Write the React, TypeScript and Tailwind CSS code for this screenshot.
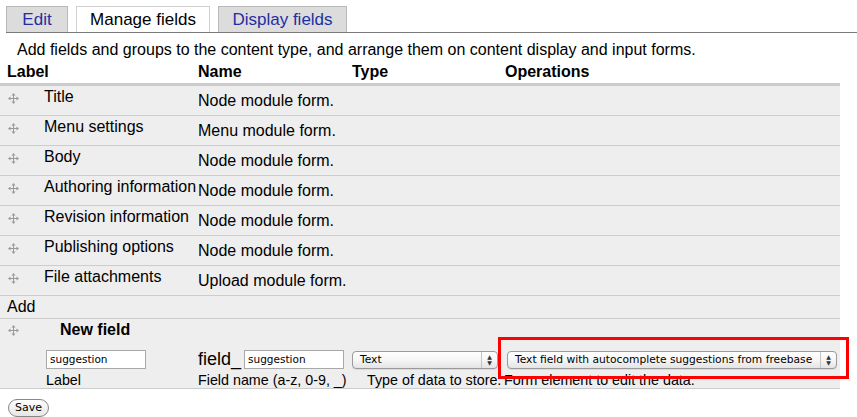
import React from "react";

const rows = [
  { label: "Title", name: "Node module form." },
  { label: "Menu settings", name: "Menu module form." },
  { label: "Body", name: "Node module form." },
  { label: "Authoring information", name: "Node module form." },
  { label: "Revision information", name: "Node module form." },
  { label: "Publishing options", name: "Node module form." },
  { label: "File attachments", name: "Upload module form." },
];

function DragIcon() {
  return (
    <svg width="11" height="11" viewBox="0 0 11 11" className="shrink-0">
      <g stroke="#9a9a9a" strokeWidth="1" fill="none">
        <line x1="5.5" y1="1" x2="5.5" y2="10" />
        <line x1="1" y1="5.5" x2="10" y2="5.5" />
      </g>
      <g fill="#9a9a9a">
        <path d="M5.5 0 L7.5 2.5 L3.5 2.5 Z" />
        <path d="M5.5 11 L7.5 8.5 L3.5 8.5 Z" />
        <path d="M0 5.5 L2.5 3.5 L2.5 7.5 Z" />
        <path d="M11 5.5 L8.5 3.5 L8.5 7.5 Z" />
      </g>
    </svg>
  );
}

function MacSelect({ value, width }: { value: string; width: string }) {
  return (
    <div
      className={`${width} h-[18px] flex items-center rounded-[4px] border border-[#9a9a9a] bg-gradient-to-b from-white via-[#f6f6f6] to-[#e4e4e4] shadow-[0_1px_0_rgba(0,0,0,0.08)] font-['DejaVu_Sans',sans-serif] text-[10.7px] text-black`}
    >
      <span className="flex-1 pl-[7px] whitespace-nowrap overflow-hidden">{value}</span>
      <span className="w-[16px] h-full flex flex-col items-center justify-center border-l border-[#c4c4c4] text-[6px] leading-[6px] text-[#333]">
        <span>▲</span>
        <span>▼</span>
      </span>
    </div>
  );
}

function TextInput({ value }: { value: string }) {
  return (
    <div className="w-[100px] h-[19px] border border-[#a9a9a9] bg-white font-['DejaVu_Sans',sans-serif] text-[10.5px] leading-[17px] pl-[3px]">
      {value}
    </div>
  );
}

export default function App() {
  return (
    <div className="w-[857px] h-[417px] bg-white font-['Liberation_Sans',Arial,sans-serif] text-[16px] text-black overflow-hidden">
      {/* tabs */}
      <div className="h-[33px] flex items-end gap-[8px] pt-[6px] border-b border-[#7a7a7a] ml-[6px]">
        <div className="w-[62px] h-[26px] flex items-center justify-center bg-[#dcdcdc] border border-b-0 border-[#b9b9b9] text-[17px] text-[#1f2fa3]">
          Edit
        </div>
        <div className="w-[134px] h-[26px] flex items-center justify-center bg-white border border-b-0 border-[#d0d0d0] text-[17px]">
          Manage fields
        </div>
        <div className="w-[129px] h-[26px] flex items-center justify-center bg-[#dcdcdc] border border-b-0 border-[#b9b9b9] text-[17px] text-[#1f2fa3]">
          Display fields
        </div>
      </div>

      <p className="pl-[17px] pt-[8px] leading-[18px]">
        Add fields and groups to the content type, and arrange them on content display and input forms.
      </p>

      <div className="w-[840px]">
        {/* header */}
        <div className="h-[27px] grid grid-cols-[198px_154px_153px_1fr] items-end pb-[2px] border-b-[3px] border-[#cccccc] font-bold leading-[18px]">
          <div className="pl-[7px]">Label</div>
          <div>Name</div>
          <div>Type</div>
          <div>Operations</div>
        </div>

        {rows.map((r) => (
          <div
            key={r.label}
            className="h-[30px] grid grid-cols-[198px_154px_153px_1fr] bg-[#eeeeee] border-b border-[#cccccc] leading-[18px]"
          >
            <div className="flex items-start pl-[8px] pt-[2px] whitespace-nowrap">
              <span className="pt-[5px]">
                <DragIcon />
              </span>
              <span className="pl-[25px]">{r.label}</span>
            </div>
            <div className="pt-[6px] whitespace-nowrap">{r.name}</div>
            <div />
            <div />
          </div>
        ))}

        <div className="h-[23px] bg-[#eeeeee] border-b border-[#cccccc] pl-[7px] pt-[2px] leading-[18px]">Add</div>

        <div className="h-[70px] bg-[#eeeeee] border-b border-[#cccccc]">
          <div className="h-[22px] flex items-center pl-[8px] leading-[18px]">
            <DragIcon />
            <span className="pl-[41px] font-bold">New field</span>
          </div>
          <div className="grid grid-cols-[198px_154px_153px_1fr] pt-[9px]">
            <div className="pl-[46px]">
              <TextInput value="suggestion" />
              <div className="pt-[3px] text-[14.3px] leading-[17px]">Label</div>
            </div>
            <div>
              <div className="flex items-center">
                <span className="text-[18px] leading-[19px] pr-[3px]">field_</span>
                <TextInput value="suggestion" />
              </div>
              <div className="pt-[3px] text-[14.3px] leading-[17px] whitespace-nowrap">Field name (a-z, 0-9, _)</div>
            </div>
            <div className="pt-[1px]">
              <MacSelect value="Text" width="w-[146px]" />
              <div className="pt-[3px] pl-[15px] text-[14.3px] leading-[17px] whitespace-nowrap">Type of data to store.</div>
            </div>
            <div className="pt-[1px] pl-[2px]">
              <div className="relative w-[330px]">
                <MacSelect value="Text field with autocomplete suggestions from freebase" width="w-[330px]" />
                <div className="absolute -left-[9px] -top-[14px] w-[351px] h-[42px] border-[3px] border-[#ff0000]" />
              </div>
              <div className="pt-[3px] -ml-[3px] text-[14.3px] leading-[17px] whitespace-nowrap">Form element to edit the data.</div>
            </div>
          </div>
        </div>
      </div>

      <div className="pl-[8px] pt-[5px]">
        <button className="h-[18px] w-[41px] rounded-full border border-[#888] bg-gradient-to-b from-white to-[#e6e6e6] font-['DejaVu_Sans',sans-serif] text-[11px] leading-[16px]">
          Save
        </button>
      </div>
    </div>
  );
}
